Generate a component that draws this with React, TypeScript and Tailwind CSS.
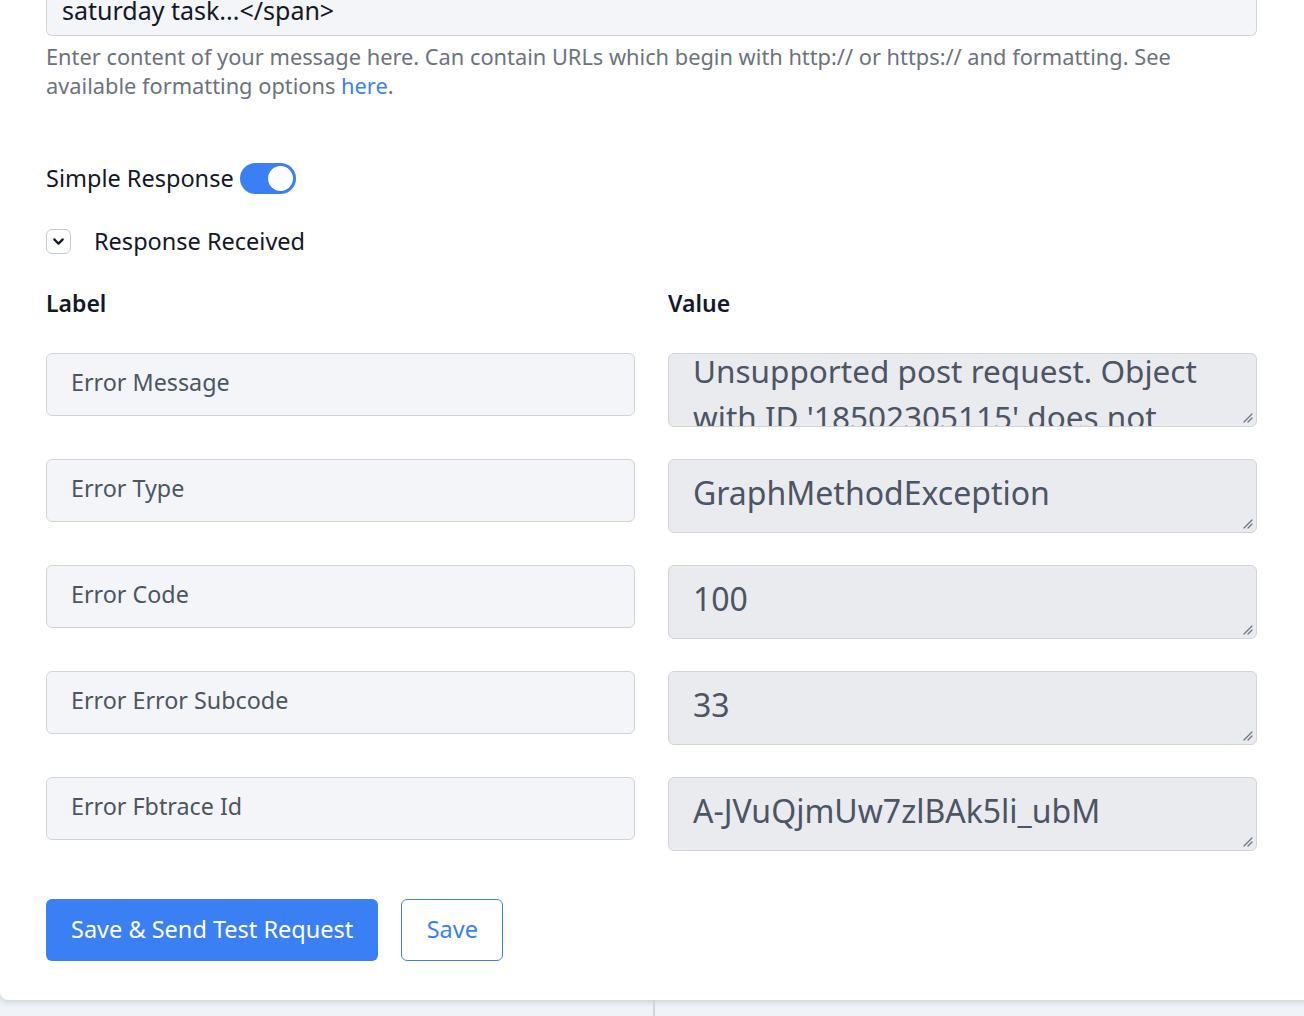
import { ChevronDown } from 'lucide-react';

const responseFields = [
  { label: 'Error Message', value: "Unsupported post request. Object with ID '18502305115' does not exist", scrolled: true },
  { label: 'Error Type', value: 'GraphMethodException' },
  { label: 'Error Code', value: '100' },
  { label: 'Error Error Subcode', value: '33' },
  { label: 'Error Fbtrace Id', value: 'A-JVuQjmUw7zlBAk5li_ubM' },
];

const ResizeGrip = () => (
  <svg className="absolute bottom-[3px] right-[3px]" width="12" height="12" viewBox="0 0 12 12">
    <path d="M11 3 L3 11 M11 7 L7 11" stroke="#6b7280" strokeWidth="1.2" strokeLinecap="round" />
  </svg>
);

const App = () => {
  return (
    <div
      className="min-h-[1016px] bg-[#f0f3f7] overflow-hidden"
      style={{ fontFamily: '"Noto Sans", Lato, sans-serif' }}
    >
      <div className="bg-white rounded-b-lg shadow-[0_2px_6px_rgba(148,163,184,0.45)] px-[46px] pb-[39px] w-[1320px]">
        <div className="w-[1211px]">
          {/* message body */}
          <div className="h-[36px] bg-[#f3f5f8] border border-[#d1d5db] border-t-0 rounded-b-md px-[15px] overflow-hidden">
            <div className="text-[25px] leading-[24px] -mt-[2px] text-[#111827]">saturday task...&lt;/span&gt;</div>
          </div>
          <p className="mt-[6px] text-[21.8px] leading-[29px] text-[#6b7280] pr-[60px]">
            Enter content of your message here. Can contain URLs which begin with http:// or https:// and formatting. See available formatting options{' '}
            <span className="text-[#3b7ff5]">here</span>.
          </p>

          {/* simple response toggle */}
          <div className="mt-[63px] flex items-center gap-[6px] h-[31px]">
            <span className="text-[23.5px] leading-[31px] text-[#111827]">Simple Response</span>
            <div className="w-[56px] h-[31px] rounded-full bg-[#3b7ff5] flex items-center justify-end pr-[3px]">
              <div className="w-[25px] h-[25px] rounded-full bg-white" />
            </div>
          </div>

          <div className="mt-[35px] flex items-center gap-[23px] h-[25px]">
            <div className="w-[25px] h-[25px] rounded-[6px] border border-[#c4c9d1] flex items-center justify-center">
              <ChevronDown size={17} strokeWidth={3} className="text-[#111827]" />
            </div>
            <span className="text-[23.5px] leading-[25px] text-[#111827]">Response Received</span>
          </div>

          {/* field table */}
          <div className="mt-[35px] grid grid-cols-2 gap-x-[33px] h-[28px] items-center">
            <span className="text-[23px] leading-[28px] font-semibold text-[#111827]">Label</span>
            <span className="text-[23px] leading-[28px] font-semibold text-[#111827]">Value</span>
          </div>

          <div className="mt-[36px] flex flex-col gap-[32px]">
            {responseFields.map((field) => (
              <div key={field.label} className="grid grid-cols-2 gap-x-[33px] items-start">
                <div className="h-[63px] bg-[#f3f5f8] border border-[#d1d5db] rounded-md px-[24px] pb-[6px] flex items-center">
                  <span className="text-[23.3px] leading-[28px] text-[#4b5563]">{field.label}</span>
                </div>
                <div className="relative h-[74px] bg-[#e9ebef] border border-[#d1d5db] rounded-md pl-[24px] pr-[30px] overflow-hidden">
                  <div
                    className={
                      field.scrolled
                        ? 'mt-[-6px] text-[31.5px] leading-[46px] text-[#4b5563]'
                        : 'mt-[10px] text-[32px] leading-[46px] text-[#4b5563]'
                    }
                  >
                    {field.value}
                  </div>
                  <ResizeGrip />
                </div>
              </div>
            ))}
          </div>

          {/* actions */}
          <div className="mt-[48px] flex gap-[23px]">
            <button className="h-[62px] px-[25px] pb-[3px] rounded-md bg-[#3b7ff5] text-white text-[23.5px] leading-[28px]">
              Save &amp; Send Test Request
            </button>
            <button className="h-[62px] w-[102px] pb-[3px] rounded-md border border-[#3b7ff5] text-[#3b7ff5] text-[23.5px] leading-[28px] bg-white">
              Save
            </button>
          </div>
        </div>
      </div>
      <div className="ml-[653px] w-[2px] h-[20px] bg-[#d1d5db]" />
    </div>
  );
};

export default App;
